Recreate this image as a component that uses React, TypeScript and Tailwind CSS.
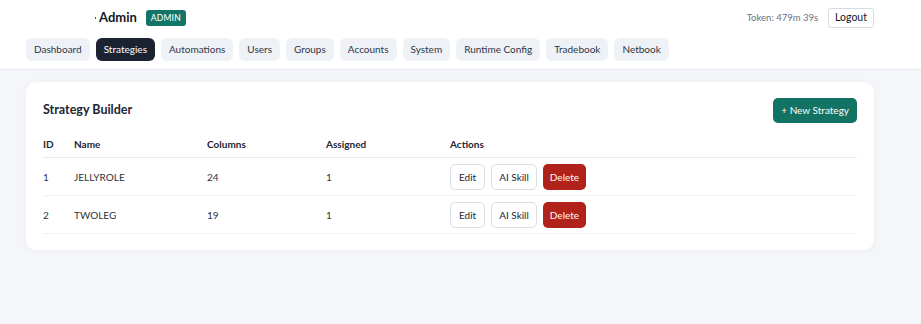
import React from 'react';

const tabs = ['Dashboard', 'Strategies', 'Automations', 'Users', 'Groups', 'Accounts', 'System', 'Runtime Config', 'Tradebook', 'Netbook'];

const strategies = [
  { id: 1, name: 'JELLYROLE', columns: 24, assigned: 1 },
  { id: 2, name: 'TWOLEG', columns: 19, assigned: 1 },
];

export default function App() {
  return (
    <div className="min-h-[324px] bg-[#f4f6fa] text-[#1e2533]" style={{ fontFamily: 'Lato, "Noto Sans", sans-serif' }}>
      {/* Header */}
      <header className="bg-white border-b border-[#e6e9ef] pl-[26px] pr-[47px] pt-[8px] pb-[8px]">
        <div className="flex items-center justify-between h-[20px]">
          <div className="flex items-center">
            <div className="w-[73px] h-[16px] flex items-center justify-end pr-[3px]">
              <span className="w-[1px] h-[2px] bg-[#555]" />
            </div>
            <span className="text-[13px] font-bold text-[#111827]">Admin</span>
            <span className="ml-[9px] bg-[#137566] text-white text-[8.5px] font-medium tracking-wide px-[5px] py-[2px] rounded-[3px]">ADMIN</span>
          </div>
          <div className="flex items-center gap-[10px]">
            <span className="text-[9.5px] text-[#6b7280]">Token: 479m 39s</span>
            <button className="text-[10.5px] text-[#111827] bg-white border border-[#d6dbe3] rounded-[3px] px-[6px] h-[20px]">Logout</button>
          </div>
        </div>
        <nav className="flex gap-[6px] mt-[10px]">
          {tabs.map((t) => (
            <button
              key={t}
              className={
                t === 'Strategies'
                  ? 'h-[23px] px-[8px] rounded-[6px] text-[10px] bg-[#1b2333] text-white'
                  : 'h-[23px] px-[8px] rounded-[6px] text-[10px] bg-[#eef1f6] text-[#2f3746]'
              }
            >
              {t}
            </button>
          ))}
        </nav>
      </header>

      {/* Content */}
      <main className="pl-[26px] pr-[47px] pt-[12px]">
        <div className="bg-white rounded-[10px] shadow-[0_1px_6px_rgba(15,23,42,0.04)] px-[17px] pt-[16px] pb-[16px]">
          <div className="flex items-center justify-between">
            <h2 className="text-[12.5px] font-bold text-[#1e2533]">Strategy Builder</h2>
            <button className="bg-[#127264] text-white text-[10px] h-[25px] px-[8px] rounded-[5px]">+ New Strategy</button>
          </div>
          <table className="w-full mt-[12px] text-left border-collapse">
            <thead>
              <tr className="border-b border-[#e5e8ee] text-[10px] font-bold text-[#1e2533]">
                <th className="w-[31px] h-[22px] pb-[2px] font-bold">ID</th>
                <th className="w-[133px] pb-[2px] font-bold">Name</th>
                <th className="w-[119px] pb-[2px] font-bold">Columns</th>
                <th className="w-[124px] pb-[2px] font-bold">Assigned</th>
                <th className="pb-[2px] font-bold">Actions</th>
              </tr>
            </thead>
            <tbody className="text-[10px] text-[#2b3340]">
              {strategies.map((s) => (
                <tr key={s.id} className="border-b border-[#f0f2f5] h-[38px]">
                  <td className="pt-[2px]">{s.id}</td>
                  <td className="pt-[2px]">{s.name}</td>
                  <td className="pt-[2px]">{s.columns}</td>
                  <td className="pt-[2px]">{s.assigned}</td>
                  <td className="pt-[2px]">
                    <div className="flex gap-[6px]">
                      <button className="h-[26px] px-[8px] border border-[#d9dee7] rounded-[5px] bg-white text-[#1e2533]">Edit</button>
                      <button className="h-[26px] px-[7px] border border-[#d9dee7] rounded-[5px] bg-white text-[#1e2533]">AI Skill</button>
                      <button className="h-[26px] px-[7px] rounded-[5px] bg-[#b1221a] text-white">Delete</button>
                    </div>
                  </td>
                </tr>
              ))}
            </tbody>
          </table>
        </div>
      </main>
    </div>
  );
}
